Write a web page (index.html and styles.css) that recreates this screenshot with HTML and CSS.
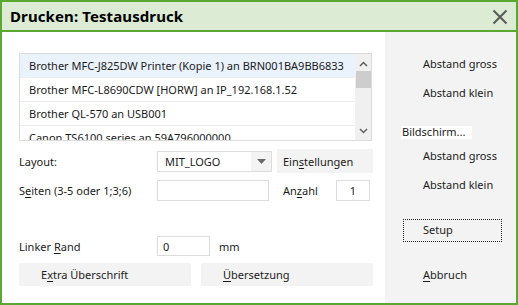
FILE: index.html
```html
<!DOCTYPE html>
<html lang="de">
<head>
    <meta charset="UTF-8">
    <title>Drucken: Testausdruck</title>
    <link rel="stylesheet" href="styles.css">
</head>
<body>
    <div class="dialog">
        <!-- title bar -->
        <div class="titlebar">
            <span class="title">Drucken: Testausdruck</span>
            <svg class="close" width="16" height="16" viewBox="0 0 16 16">
                <path d="M1.5 1.5 L14.5 14.5 M14.5 1.5 L1.5 14.5" stroke="#5a5a5a" stroke-width="2" fill="none"/>
            </svg>
        </div>

        <div class="content">
            <div class="main">
                <!-- printer list -->
                <div class="printers">
                    <ul class="rows">
                        <li class="sel">Brother MFC-J825DW Printer (Kopie 1) an BRN001BA9BB6833</li>
                        <li>Brother MFC-L8690CDW [HORW] an IP_192.168.1.52</li>
                        <li>Brother QL-570 an USB001</li>
                        <li>Canon TS6100 series an 59A796000000</li>
                    </ul>
                    <div class="scroll">
                        <svg width="15" height="12" viewBox="0 0 15 12"><path d="M4 8 L7.5 4.5 L11 8" stroke="#606060" stroke-width="1.5" fill="none"/></svg>
                        <div class="thumb"></div>
                        <div class="track"></div>
                        <svg width="15" height="12" viewBox="0 0 15 12"><path d="M4 4 L7.5 7.5 L11 4" stroke="#606060" stroke-width="1.5" fill="none"/></svg>
                    </div>
                </div>

                <div class="row r-layout">
                    <span class="label">Layout:</span>
                    <div class="select">
                        <span class="val">MIT_LOGO</span>
                        <span class="arrow"><svg width="9" height="5" viewBox="0 0 9 5"><path d="M0 0 L9 0 L4.5 5 Z" fill="#6a6a6a"/></svg></span>
                    </div>
                    <div class="btn settings">Ein<u>s</u>tellungen</div>
                </div>

                <div class="row r-pages">
                    <span class="label">S<u>e</u>iten (3-5 oder 1;3;6)</span>
                    <div class="field pages"></div>
                    <span class="count-label">An<u>z</u>ahl</span>
                    <div class="field count">1</div>
                </div>

                <div class="row r-margin">
                    <span class="label">Linker <u>R</u>and</span>
                    <div class="field margin">0</div>
                    <span class="unit">mm</span>
                </div>

                <div class="row r-buttons">
                    <div class="btn wide">E<u>x</u>tra Überschrift</div>
                    <div class="btn wide"><u>Ü</u>bersetzung</div>
                </div>
            </div>

            <!-- right side buttons -->
            <div class="side">
                <div class="sbtn first">Abstand gross</div>
                <div class="sbtn">Abstand klein</div>
                <div class="screen">Bildschirm...</div>
                <div class="sbtn after-screen">Abstand gross</div>
                <div class="sbtn">Abstand klein</div>
                <div class="sbtn setup">Setup</div>
                <div class="sbtn cancel"><u>A</u>bbruch</div>
            </div>
        </div>
    </div>
</body>
</html>
```

FILE: styles.css
```css
* {
    margin: 0px;
    padding: 0px;
    box-sizing: border-box;
}

body {
    font-family: "Noto Sans", "Open Sans", sans-serif;
    font-size: 11px;
    color: #1b1b1b;
    background: #ffffff;
}

u {
    text-decoration-thickness: 1px;
    text-underline-offset: 2px;
}

.dialog {
    width: 518px;
    height: 305px;
    border: 2px solid #5aa832;
    display: flex;
    flex-direction: column;
    background: #ffffff;
}

.titlebar {
    height: 30px;
    background: #dcebd4;
    border-bottom: 2px solid #5aa832;
    display: flex;
    align-items: center;
    justify-content: space-between;
    padding: 0px 8px 0px 8px;
}

.title {
    font-size: 15px;
    font-weight: bold;
    color: #000000;
    letter-spacing: 0.1px;
}

.close {
    margin-top: 1px;
}

.content {
    flex: 1;
    display: flex;
}

.main {
    width: 383px;
    padding: 21px 0px 0px 17px;
}

/* printer list */
.printers {
    width: 353px;
    height: 88px;
    border: 1px solid #dcdcdc;
    display: flex;
    overflow: hidden;
}

.rows {
    list-style: none;
    flex: 1;
}

.rows li {
    height: 24px;
    line-height: 23px;
    padding-left: 9px;
    border-bottom: 1px solid #ececec;
    white-space: nowrap;
    overflow: hidden;
}

.rows li.sel {
    background: #eaf2fc;
}

.scroll {
    width: 16px;
    background: #f0f0f0;
    display: flex;
    flex-direction: column;
    align-items: center;
    padding-top: 4px;
}

.thumb {
    width: 15px;
    height: 17px;
    margin-top: 1px;
    background: #cdcdcd;
}

.track {
    flex: 1;
}

.scroll svg:last-child {
    margin-bottom: 3px;
}

/* form rows */
.row {
    display: flex;
    align-items: center;
    white-space: nowrap;
}

.label {
    width: 138px;
}

.r-layout {
    margin-top: 8px;
    height: 24px;
}

.select {
    width: 115px;
    height: 21px;
    border: 1px solid #dcdcdc;
    display: flex;
    margin-top: 1px;
}

.select .val {
    flex: 1;
    padding-left: 7px;
    line-height: 19px;
}

.select .arrow {
    width: 20px;
    background: #f3f3f3;
    display: flex;
    align-items: center;
    justify-content: center;
}

.btn {
    background: #f3f3f3;
    display: flex;
    align-items: center;
}

.settings {
    width: 96px;
    height: 24px;
    margin-left: 5px;
    padding-left: 6px;
}

.r-pages {
    margin-top: 7px;
    height: 21px;
}

.field {
    height: 21px;
    border: 1px solid #dcdcdc;
    background: #ffffff;
    line-height: 19px;
}

.pages {
    width: 112px;
}

.count-label {
    margin-left: 14px;
    width: 53px;
}

.count {
    width: 34px;
    text-align: center;
}

.r-margin {
    margin-top: 35px;
    height: 20px;
}

.margin {
    width: 53px;
    height: 20px;
    padding-left: 5px;
}

.unit {
    margin-left: 9px;
}

.r-buttons {
    margin-top: 7px;
    gap: 10px;
}

.wide {
    width: 172px;
    height: 23px;
    padding-left: 22px;
}

/* right side */
.side {
    flex: 1;
    background: #f3f3f3;
    padding: 21px 0px 0px 18px;
    display: flex;
    flex-direction: column;
    white-space: nowrap;
}

.sbtn {
    width: 99px;
    height: 23px;
    line-height: 22px;
    padding-left: 20px;
}

.sbtn + .sbtn {
    margin-top: 6px;
}

.screen {
    background: #ffffff;
    width: 71px;
    height: 13px;
    line-height: 12px;
    margin: 21px 0px 0px -2px;
    padding-left: 1px;
}

.after-screen {
    margin-top: 6px;
}

.sbtn.setup {
    margin-top: 22px;
    border: 1px dotted #222222;
    padding-left: 19px;
    line-height: 20px;
}

.sbtn.cancel {
    margin-top: 22px;
}
```
